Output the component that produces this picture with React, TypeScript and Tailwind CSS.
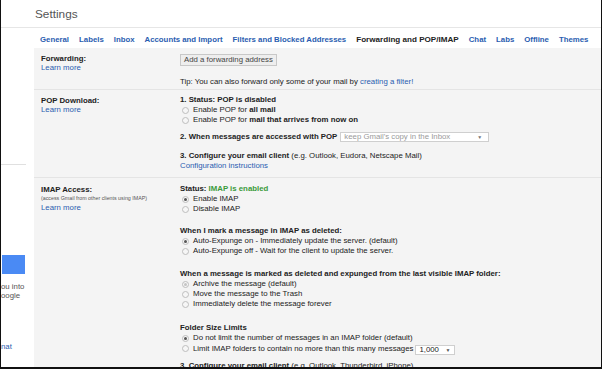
import React from "react";

function Radio({ checked, dim }: { checked?: boolean; dim?: boolean }) {
  return (
    <span className="ml-[2px] mr-[4px] inline-flex h-[7px] w-[7px] shrink-0 items-center justify-center rounded-full border border-[#bdbdbd] bg-[#f6f6f6]">
      {checked && (
        <span className={dim ? "h-[3px] w-[3px] rounded-full bg-[#c4c4c4]" : "h-[3px] w-[3px] rounded-full bg-[#555]"} />
      )}
    </span>
  );
}

function RadioRow({ checked, dim, children }: { checked?: boolean; dim?: boolean; children: React.ReactNode }) {
  return (
    <div className="flex h-[10px] items-center whitespace-nowrap">
      <Radio checked={checked} dim={dim} />
      <span>{children}</span>
    </div>
  );
}

const tabs = [
  "General",
  "Labels",
  "Inbox",
  "Accounts and Import",
  "Filters and Blocked Addresses",
];
const tabs2 = ["Chat", "Labs", "Offline", "Themes"];

export default function App() {
  return (
    <div
      className="flex h-[369px] w-[602px] flex-col overflow-hidden border-b-2 border-l border-r border-[#111] bg-white text-[#222]"
      style={{ fontFamily: '"Liberation Sans", Arial, sans-serif' }}
    >
      {/* header */}
      <div className="flex h-[28px] shrink-0 items-center border-b border-[#e6e6e6] pl-[34px]">
        <span className="text-[11.8px] leading-[12px] text-[#555]">Settings</span>
      </div>
      <div className="flex min-h-0 flex-1">
        {/* left sidebar */}
        <div className="flex w-[33px] shrink-0 flex-col bg-white text-[7.8px] leading-[9px]">
          <div className="mt-[136px] h-px w-[25px] bg-[#e0e0e0]" />
          <div className="ml-[1px] mt-[90px] h-[19px] w-[23px] bg-[#4a8af4]" />
          <div className="mt-[8px] text-[#555]">ou into</div>
          <div className="text-[#555]">oogle</div>
          <div className="mt-[42px] text-[#2a5db0]">nat</div>
        </div>
        {/* main */}
        <div className="flex min-w-0 flex-1 flex-col">
          <div className="flex h-[20px] shrink-0 gap-[10px] whitespace-nowrap bg-white pl-[6px] pt-[7px] text-[7.8px] font-bold leading-[10px] text-[#2a5db0]">
            {tabs.map((t) => (
              <span key={t}>{t}</span>
            ))}
            <span className="text-[8.1px] text-[#222]">Forwarding and POP/IMAP</span>
            {tabs2.map((t) => (
              <span key={t}>{t}</span>
            ))}
          </div>
          <div className="flex-1 bg-[#f4f4f4] text-[7.8px] leading-[10px]">
            {/* Forwarding */}
            <div className="flex border-b border-[#e4e4e4] pb-[2px] pl-[7px] pt-[6px]">
              <div className="w-[139px] shrink-0 leading-[9px]">
                <div className="font-bold">Forwarding:</div>
                <div className="text-[#2a5db0]">Learn more</div>
              </div>
              <div className="flex flex-col">
                <div className="flex h-[12px] w-[97px] items-center justify-center border border-[#c8c8c8] bg-[#eeeeee] text-[#444]">
                  Add a forwarding address
                </div>
                <div className="mt-[11px] whitespace-nowrap">
                  Tip: You can also forward only some of your mail by{" "}
                  <span className="text-[#2a5db0]">creating a filter!</span>
                </div>
              </div>
            </div>
            {/* POP */}
            <div className="flex border-b border-[#e4e4e4] pb-[7px] pl-[7px] pt-[5px]">
              <div className="w-[139px] shrink-0 leading-[9px]">
                <div className="mt-[1px] font-bold">POP Download:</div>
                <div className="text-[#2a5db0]">Learn more</div>
              </div>
              <div className="flex flex-col whitespace-nowrap">
                <div className="font-bold">1. Status: POP is disabled</div>
                <RadioRow>
                  Enable POP for <b>all mail</b>
                </RadioRow>
                <RadioRow>
                  Enable POP for <b>mail that arrives from now on</b>
                </RadioRow>
                <div className="mt-[7px] flex h-[10px] items-center">
                  <span className="font-bold">2. When messages are accessed with POP</span>
                  <div className="ml-[3px] flex h-[10px] w-[149px] items-center justify-between border border-[#cfcfcf] bg-white pl-[3px] pr-[6px] text-[#9a9a9a]">
                    <span>keep Gmail's copy in the Inbox</span>
                    <span className="text-[5px] leading-[5px] text-[#777]">▼</span>
                  </div>
                </div>
                <div className="mt-[9px]">
                  <b>3. Configure your email client</b> (e.g. Outlook, Eudora, Netscape Mail)
                </div>
                <div className="leading-[9px] text-[#2a5db0]">Configuration instructions</div>
              </div>
            </div>
            {/* IMAP */}
            <div className="flex pl-[7px] pt-[6px]">
              <div className="w-[139px] shrink-0 leading-[9px]">
                <div className="mt-[0.5px] font-bold">IMAP Access:</div>
                <div className="whitespace-nowrap text-[5.3px] leading-[9px] text-[#555]">
                  (access Gmail from other clients using IMAP)
                </div>
                <div className="text-[#2a5db0]">Learn more</div>
              </div>
              <div className="flex flex-col whitespace-nowrap">
                <div className="font-bold">
                  Status: <span className="text-[#3a9a3a]">IMAP is enabled</span>
                </div>
                <RadioRow checked>Enable IMAP</RadioRow>
                <RadioRow>Disable IMAP</RadioRow>

                <div className="mt-[12px] font-bold">When I mark a message in IMAP as deleted:</div>
                <RadioRow checked>Auto-Expunge on - Immediately update the server. (default)</RadioRow>
                <RadioRow>Auto-Expunge off - Wait for the client to update the server.</RadioRow>

                <div className="mt-[13px] font-bold">
                  When a message is marked as deleted and expunged from the last visible IMAP folder:
                </div>
                <RadioRow checked dim>
                  Archive the message (default)
                </RadioRow>
                <RadioRow>Move the message to the Trash</RadioRow>
                <RadioRow>Immediately delete the message forever</RadioRow>

                <div className="mt-[14px] font-bold">Folder Size Limits</div>
                <RadioRow checked>Do not limit the number of messages in an IMAP folder (default)</RadioRow>
                <div className="flex h-[11px] items-center">
                  <Radio />
                  <span>Limit IMAP folders to contain no more than this many messages</span>
                  <div className="ml-[2px] mt-[3px] flex h-[10px] w-[40px] items-center justify-between border border-[#cfcfcf] bg-white pl-[3px] pr-[4px] text-[#222]">
                    <span>1,000</span>
                    <span className="text-[5px] leading-[5px] text-[#555]">▼</span>
                  </div>
                </div>
                <div className="mt-[7px]">
                  <b>3. Configure your email client</b> (e.g. Outlook, Thunderbird, iPhone)
                </div>
              </div>
            </div>
          </div>
        </div>
      </div>
    </div>
  );
}
